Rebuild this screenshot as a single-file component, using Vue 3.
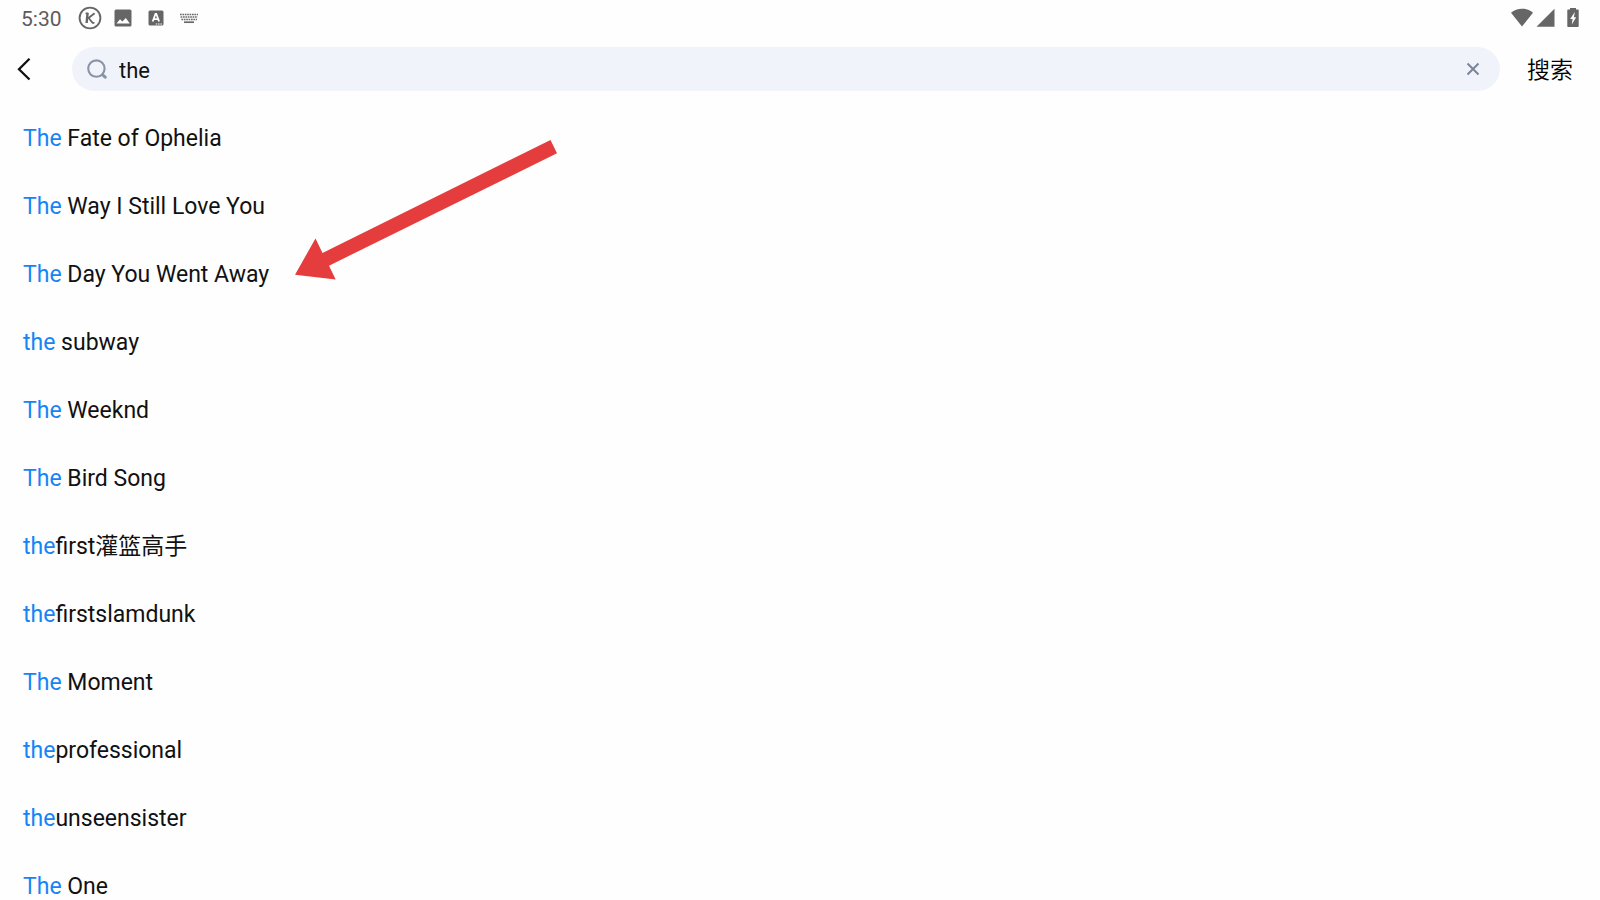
<script setup>
import { ref } from 'vue'

const query = ref('the')
const suggestions = [
  ['The', ' Fate of Ophelia'],
  ['The', ' Way I Still Love You'],
  ['The', ' Day You Went Away'],
  ['the', ' subway'],
  ['The', ' Weeknd'],
  ['The', ' Bird Song'],
  ['the', 'first灌篮高手'],
  ['the', 'firstslamdunk'],
  ['The', ' Moment'],
  ['the', 'professional'],
  ['the', 'unseensister'],
  ['The', ' One'],
]
</script>

<template>
  <div class="screen">
    <div class="status">
      <div class="status-left">
        <time class="clock">5:30</time>
        <svg class="i-k" viewBox="0 0 24 24" width="24" height="24" fill="none" stroke="#666" aria-hidden="true">
          <circle cx="12" cy="12" r="10.4" stroke-width="1.9" />
          <path d="M9.6 7 8.6 17" stroke-width="2.4" />
          <path d="M7.6 7.4h2.6M16.6 7.2 10.6 12l4 4.8h1.8" stroke-width="1.8" />
        </svg>
        <svg class="i-image" viewBox="0 0 18 18" width="18" height="18" aria-hidden="true">
          <rect x=".5" y=".5" width="17" height="17" rx="1.5" fill="#666" />
          <path d="M2.5 14.5 6 10.2l2.4 2.4L11.8 9l4 5.5z" fill="#fff" />
        </svg>
        <svg class="i-a" viewBox="0 0 16 16" width="16" height="16" aria-hidden="true">
          <rect x=".5" y=".5" width="15" height="15" rx="1.5" fill="#666" />
          <path d="M4.7 11.5 7.5 4h.8l2.8 7.5M5.8 9.2h4.1" fill="none" stroke="#fff" stroke-width="1.8" />
          <path d="M7.8 14h1.5m.8 0h1.5m.8 0h1.5" stroke="#fff" stroke-width="1.2" />
        </svg>
        <svg class="i-keys" viewBox="0 0 20 12" width="20" height="12" fill="none" stroke="#6a6a6a" aria-hidden="true">
          <path d="M1 2.5h18M1.6 5h17M2.4 7.5h15.6" stroke-width="1.6" stroke-dasharray="1.7 .7" />
          <path d="M5 10.2h10" stroke-width="1.7" />
        </svg>
      </div>
      <div class="status-right">
        <svg viewBox="0 0 24 20" width="24" height="20" aria-hidden="true">
          <path d="M1 4.7C7-.7 17-.7 23 4.7L12 18.4z" fill="#666" />
        </svg>
        <svg viewBox="0 0 19 20" width="19" height="20" aria-hidden="true">
          <path d="M18.5.8v18H.5z" fill="#666" />
        </svg>
        <svg class="i-battery" viewBox="0 0 12 20" width="12" height="20" aria-hidden="true">
          <path d="M3 0h6v1.5h2q.7 0 .7.7v16.1q0 .7-.7.7H1q-.7 0-.7-.7V2.2q0-.7.7-.7h2z" fill="#666" />
          <path d="M7.8 4 3.2 11h2.4L4.8 16.4 9.2 9.2H6.9z" fill="#fff" />
        </svg>
      </div>
    </div>

    <form class="header" @submit.prevent>
      <button type="button" class="back" aria-label="返回">
        <svg viewBox="0 0 14 24" width="14" height="24" fill="none" stroke="#111" stroke-width="2.3" aria-hidden="true">
          <path d="M12.5 1.8 2 12.3l10.5 10.2" />
        </svg>
      </button>
      <div class="search-box">
        <svg viewBox="0 0 20 20" width="20" height="20" fill="none" stroke="#8a93a6" aria-hidden="true">
          <circle cx="9.4" cy="9.6" r="8.2" stroke-width="2.1" />
          <path d="m15.6 15.8 2.6 2.4" stroke-width="3" stroke-linecap="round" />
        </svg>
        <input v-model="query" type="text" aria-label="搜索关键词" />
        <button type="button" class="clear" aria-label="清除" @click="query = ''">
          <svg viewBox="0 0 14 14" width="14" height="14" fill="none" stroke="#7b849a" stroke-width="2" aria-hidden="true">
            <path d="m1.5 1.5 11 11m0-11-11 11" />
          </svg>
        </button>
      </div>
      <button type="submit" class="submit">搜索</button>
    </form>

    <ul class="list">
      <li v-for="[match, rest] in suggestions" :key="match + rest">
        <a href="#" @click.prevent><span class="match">{{ match }}</span>{{ rest }}</a>
      </li>
    </ul>

    <svg class="arrow" viewBox="0 0 264 142" width="264" height="142" aria-hidden="true">
      <path d="M1 136.7 21.5 100.5 28.5 115 256.5 2 263 15.2 35 127.7 41.7 141.5z" fill="#e53d3d" />
    </svg>
  </div>
</template>

<style>
body {
  background: #fefefe;
}
</style>

<style scoped>
.screen {
  position: relative;
  height: 100vh;
  overflow: hidden;
  background: #fefefe;
  color: #111;
  font-family: Roboto, "Noto Sans CJK SC", sans-serif;
  font-size: 23px;
}
svg {
  display: block;
  flex: none;
}
button {
  padding: 0;
  border: 0;
  background: none;
  color: inherit;
  font: inherit;
  cursor: pointer;
}
.status,
.status-left,
.status-right {
  display: flex;
  align-items: center;
}
.status {
  justify-content: space-between;
  height: 36px;
  padding: 0 21px;
}
.clock {
  width: 57px;
  padding-top: 2px;
  font-size: 21px;
  color: #5c5c5c;
}
.i-image {
  margin-left: 12px;
}
.i-a {
  margin-left: 16px;
}
.i-keys {
  margin-left: 15px;
}
.status-right {
  gap: 2px;
}
.i-battery {
  margin-left: 10px;
}
.header {
  display: flex;
  align-items: center;
  height: 66px;
}
.back {
  display: flex;
  align-items: center;
  width: 72px;
  height: 44px;
  padding-left: 17px;
}
.search-box {
  display: flex;
  flex: 1;
  align-items: center;
  height: 44px;
  padding: 0 20px 0 15px;
  border-radius: 22px;
  background: #f0f4fa;
}
.search-box input {
  flex: 1;
  min-width: 0;
  height: 44px;
  padding: 2px 0 0 12px;
  border: 0;
  outline: 0;
  background: none;
  color: inherit;
  font: inherit;
  font-size: 22px;
}
.clear {
  display: grid;
  width: 14px;
  height: 28px;
  place-items: center;
}
.submit {
  width: 100px;
  height: 44px;
  padding-bottom: 2px;
  color: #000;
  font-weight: 350;
}
.list {
  margin: 3px 0 0;
  padding: 0;
  list-style: none;
}
.list a {
  display: block;
  height: 68px;
  padding-left: 23px;
  line-height: 68px;
  color: inherit;
  text-decoration: none;
}
.match {
  color: #1485f5;
}
.arrow {
  position: absolute;
  top: 138px;
  left: 294px;
}
</style>
